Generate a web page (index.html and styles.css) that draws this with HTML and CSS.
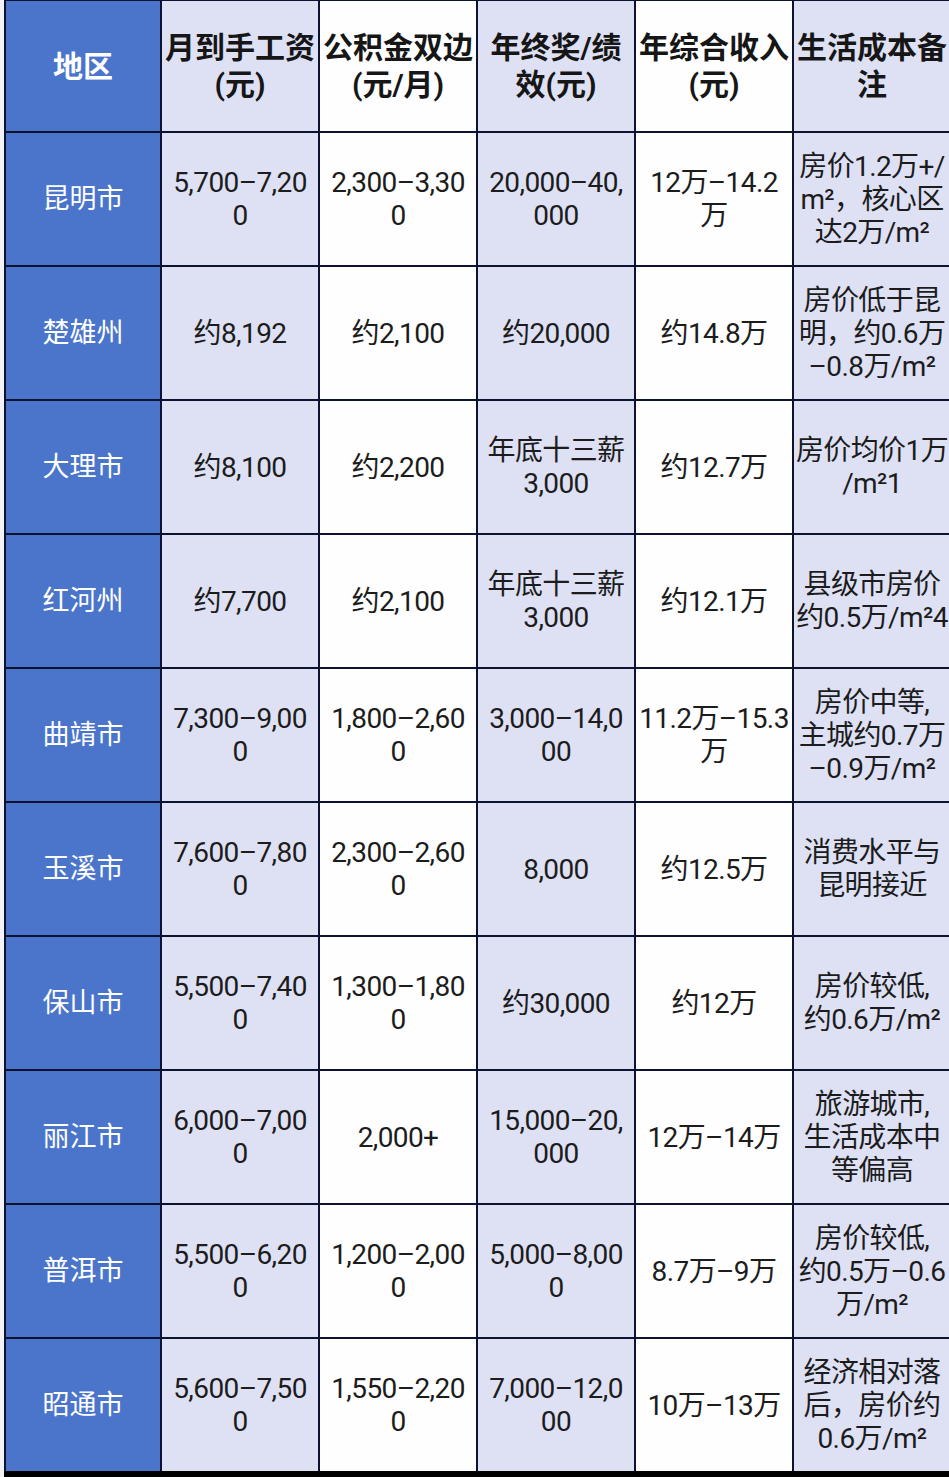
FILE: index.html
```html
<!DOCTYPE html>
<html lang="zh-CN">
<head>
<meta charset="utf-8">
<title>云南各地区收入对比</title>
<link rel="stylesheet" href="styles.css">
</head>
<body>
<div class="page">
  <div class="tbl">
    <div class="c reg head">地区</div>
    <div class="c lav th">月到手工资<br>(元)</div>
    <div class="c wht th">公积金双边<br>(元/月)</div>
    <div class="c lav th">年终奖/绩<br>效(元)</div>
    <div class="c wht th">年综合收入<br>(元)</div>
    <div class="c lav th">生活成本备<br>注</div>

    <div class="c reg">昆明市</div>
    <div class="c lav">5,700–7,20<br>0</div>
    <div class="c wht">2,300–3,30<br>0</div>
    <div class="c lav">20,000–40,<br>000</div>
    <div class="c wht">12万–14.2<br>万</div>
    <div class="c lav">房价1.2万+/<br>m²，核心区<br>达2万/m²</div>

    <div class="c reg">楚雄州</div>
    <div class="c lav">约8,192</div>
    <div class="c wht">约2,100</div>
    <div class="c lav">约20,000</div>
    <div class="c wht">约14.8万</div>
    <div class="c lav">房价低于昆<br>明，约0.6万<br>–0.8万/m²</div>

    <div class="c reg">大理市</div>
    <div class="c lav">约8,100</div>
    <div class="c wht">约2,200</div>
    <div class="c lav">年底十三薪<br>3,000</div>
    <div class="c wht">约12.7万</div>
    <div class="c lav">房价均价1万<br>/m²1</div>

    <div class="c reg">红河州</div>
    <div class="c lav">约7,700</div>
    <div class="c wht">约2,100</div>
    <div class="c lav">年底十三薪<br>3,000</div>
    <div class="c wht">约12.1万</div>
    <div class="c lav">县级市房价<br>约0.5万/m²4</div>

    <div class="c reg">曲靖市</div>
    <div class="c lav">7,300–9,00<br>0</div>
    <div class="c wht">1,800–2,60<br>0</div>
    <div class="c lav">3,000–14,0<br>00</div>
    <div class="c wht">11.2万–15.3<br>万</div>
    <div class="c lav">房价中等,<br>主城约0.7万<br>–0.9万/m²</div>

    <div class="c reg">玉溪市</div>
    <div class="c lav">7,600–7,80<br>0</div>
    <div class="c wht">2,300–2,60<br>0</div>
    <div class="c lav">8,000</div>
    <div class="c wht">约12.5万</div>
    <div class="c lav">消费水平与<br>昆明接近</div>

    <div class="c reg">保山市</div>
    <div class="c lav">5,500–7,40<br>0</div>
    <div class="c wht">1,300–1,80<br>0</div>
    <div class="c lav">约30,000</div>
    <div class="c wht">约12万</div>
    <div class="c lav">房价较低,<br>约0.6万/m²</div>

    <div class="c reg">丽江市</div>
    <div class="c lav">6,000–7,00<br>0</div>
    <div class="c wht">2,000+</div>
    <div class="c lav">15,000–20,<br>000</div>
    <div class="c wht">12万–14万</div>
    <div class="c lav">旅游城市,<br>生活成本中<br>等偏高</div>

    <div class="c reg">普洱市</div>
    <div class="c lav">5,500–6,20<br>0</div>
    <div class="c wht">1,200–2,00<br>0</div>
    <div class="c lav">5,000–8,00<br>0</div>
    <div class="c wht">8.7万–9万</div>
    <div class="c lav">房价较低,<br>约0.5万–0.6<br>万/m²</div>

    <div class="c reg">昭通市</div>
    <div class="c lav">5,600–7,50<br>0</div>
    <div class="c wht">1,550–2,20<br>0</div>
    <div class="c lav">7,000–12,0<br>00</div>
    <div class="c wht">10万–13万</div>
    <div class="c lav">经济相对落<br>后，房价约<br>0.6万/m²</div>
  </div>
</div>
</body>
</html>
```

FILE: styles.css
```css
html, body {
  margin: 0;
  padding: 0;
  background: #f2f3f7;
  overflow: hidden;
}
.page {
  width: 949px;
  height: 1477px;
  overflow: hidden;
  background: #f2f3f7;
}
.tbl {
  margin-left: 4px;
  width: 946px;
  display: grid;
  grid-template-columns: 154px repeat(5, 156px);
  grid-template-rows: 130px repeat(10, 132px);
  gap: 2px;
  padding: 1px 0 0 2px;
  background: #0c1330;
  font-family: Roboto, "Noto Sans CJK SC", sans-serif;
  font-size: 28px;
  line-height: 33px;
  color: #1c1c1c;
  border-bottom: 8px solid #000;
}
.c {
  display: flex;
  align-items: center;
  justify-content: center;
  text-align: center;
  white-space: nowrap;
  letter-spacing: -0.6px;
  overflow: visible;
}
.reg {
  background: #4a75cb;
  color: #fff;
  font-size: 27px;
  letter-spacing: 0;
}
.lav {
  background: #dee1f4;
}
.wht {
  background: #fefefe;
}
.head {
  font-weight: 700;
  font-size: 30px;
}
.th {
  font-weight: 700;
  font-size: 30px;
  line-height: 37px;
  color: #161616;
  letter-spacing: 0;
}
```
